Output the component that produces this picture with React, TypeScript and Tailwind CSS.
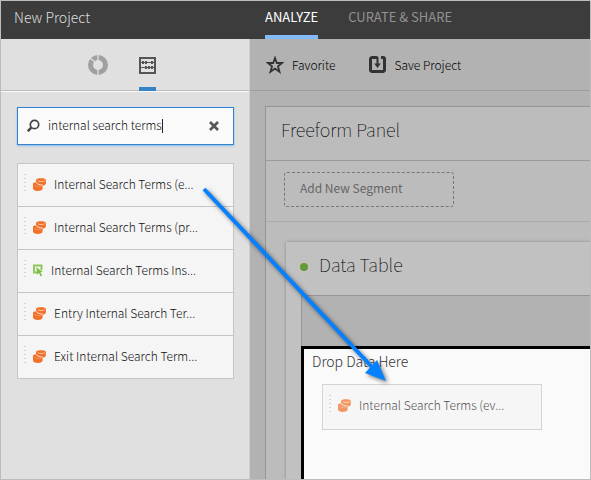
import { useState } from "react";

const items = [
  { label: "Internal Search Terms (e...", kind: "dimension" },
  { label: "Internal Search Terms (pr...", kind: "dimension" },
  { label: "Internal Search Terms Ins...", kind: "metric" },
  { label: "Entry Internal Search Ter...", kind: "dimension" },
  { label: "Exit Internal Search Term...", kind: "dimension" },
];

function Grip() {
  return (
    <svg width="2" height="17" viewBox="0 0 2 17" className="mr-[7px] mb-1 shrink-0" fill="#d2d2d2" aria-hidden="true">
      {[0, 4, 8, 12, 16].map((y) => (
        <rect key={y} x="0" y={y} width="2" height="1" />
      ))}
    </svg>
  );
}

function DimensionIcon() {
  return (
    <svg width="13" height="13" viewBox="0 0 13 13" className="mr-2 shrink-0" aria-hidden="true">
      <path d="M3 2.200C3 .8 5 .2 8 .2s4.900.6 4.900 2v3C12.900 6.600 11 7.800 8.500 7.800 5 7.800 3 5.500 3 4z" fill="#f37029" />
      <path d="M4.800 2.600c.6 1.300 5.800 1.300 7 .1" fill="none" stroke="#ffd9c0" strokeWidth=".8" />
      <path d="M0 6C0 5 1 4.400 2.800 4.300 4 6 6 6.900 9.600 7.200v3.200c0 1.600-2 2.500-4.800 2.500S0 12 0 10.400z" fill="#f37029" />
      <path d="M3 4.200c1 1.900 3.500 2.800 6.800 2.900" fill="none" stroke="#f5f5f5" strokeWidth=".9" />
      <path d="M1.200 7.300c1.500 1.300 4.500 1.600 6.800 1.200" fill="none" stroke="#f9a878" strokeWidth=".6" />
    </svg>
  );
}

function MetricIcon() {
  return (
    <svg width="10" height="13" viewBox="0 0 10 13" className="mr-2 shrink-0" aria-hidden="true">
      <path d="M4 8.500H1v-7h7.500V6" fill="none" stroke="#8bc657" strokeWidth="1.900" />
      <path d="M3.200 3.300 9.900 8H7.500l1.600 3.600-1.500.8L6 9 4.200 10.700z" fill="#7bc043" />
    </svg>
  );
}

function DonutIcon() {
  return (
    <svg width="20" height="20" viewBox="0 0 20 20" aria-hidden="true">
      <circle cx="10" cy="10" r="7.500" fill="none" stroke="#a0a0a0" strokeWidth="5" />
      <path d="M10 0v6M10 14v6M2 3l5 4" stroke="#e0e0e0" strokeWidth="1.300" />
    </svg>
  );
}

function AbacusIcon() {
  return (
    <svg width="17" height="17" viewBox="0 0 17 17" aria-hidden="true">
      <rect x="1" y="1" width="15" height="15" fill="none" stroke="#555" strokeWidth="2" />
      <path d="M2 5.500h13M2 10.500h13" stroke="#555" />
      <path d="M3 4h2v3H3zM6 4h2v3H6zM12 4h2v3h-2zM6 9h2v3H6zM9 9h2v3H9zM12 9h2v3h-2z" fill="#555" />
    </svg>
  );
}

export default function App() {
  const [query, setQuery] = useState("internal search terms");
  return (
    <div className="relative flex h-screen flex-col overflow-hidden border border-[#bdbdbd] bg-[#b2b2b2] font-['Noto_Sans_CJK_SC','Open_Sans',sans-serif] text-[12px] leading-4 font-light text-[#111]">
      <header className="flex h-[38px] shrink-0 bg-[#3c3c3c]">
        <h1 className="w-[249px] shrink-0 pt-1 pl-[13px] text-[14px] leading-6 font-light text-[#dedede]">New Project</h1>
        <nav className="flex gap-[30px] pl-[15px] text-[13px] font-normal">
          <button className="border-b-4 border-[#84b9f7] pb-[3px] text-white">ANALYZE</button>
          <button className="border-b-4 border-transparent pb-[3px] text-[#929292]">CURATE &amp; SHARE</button>
        </nav>
      </header>

      <div className="flex min-h-0 flex-1">
        <aside className="w-[249px] shrink-0 border-r border-[#d0d0d0] bg-[#e0e0e0]">
          <div className="flex h-[53px] justify-center gap-[31px] border-b border-[#fafafa] pr-[6px] shadow-[inset_0_-1px_0_#bbb]">
            <button aria-label="Components" className="flex h-[52px] items-center"><DonutIcon /></button>
            <button aria-label="Metrics" className="flex h-[52px] items-end border-b-4 border-[#3583c7] pb-[13px]"><AbacusIcon /></button>
          </div>

          <div className="pt-[15px] pr-[15px] pl-4">
            <div className="flex h-[38px] items-center border border-[#2f83cf] bg-[#fafafa] pr-[14px] pb-px pl-[9px] shadow-[0_1px_2px_#8dbbe8]">
              <svg width="13" height="13" viewBox="0 0 13 13" className="shrink-0" fill="none" stroke="#444" aria-hidden="true">
                <circle cx="7.500" cy="5.500" r="4.200" strokeWidth="1.700" />
                <path d="m4.300 8.700-3.500 3.500" strokeWidth="2.400" />
              </svg>
              <div className="relative ml-2 min-w-0 flex-1">
                <input aria-label="Search components" value={query} onChange={(e) => setQuery(e.target.value)} className="block h-6 w-full bg-transparent pb-[2px] outline-none" />
                <span className="pointer-events-none absolute inset-0 flex items-center" aria-hidden="true">
                  <span className="invisible whitespace-pre">{query}</span>
                  <span className="h-[14px] w-px bg-[#222]" />
                </span>
              </div>
              <button aria-label="Clear search">
                <svg width="10" height="10" viewBox="0 0 10 10" stroke="#555" strokeWidth="2.600" aria-hidden="true"><path d="m1 1 8 8M9 1 1 9" /></svg>
              </button>
            </div>

            <ul className="mt-[18px] divide-y divide-[#c5c5c5] border border-[#c5c5c5] bg-[#f5f5f5]">
              {items.map((item) => (
                <li key={item.label} className="flex h-[43px] items-center pb-[2px] pl-[6px] last:h-[42px]">
                  <Grip />
                  {item.kind === "metric" ? <MetricIcon /> : <DimensionIcon />}
                  <span className="whitespace-nowrap">{item.label}</span>
                </li>
              ))}
            </ul>
          </div>
        </aside>

        <main className="flex min-w-0 flex-1 flex-col">
          <div className="flex h-[52px] shrink-0 items-center gap-[34px] border-b border-[#9d9d9d] pl-4 text-black">
            <button className="flex items-center gap-2">
              <svg width="18" height="18" viewBox="0 0 18 18" fill="none" stroke="#333" strokeWidth="1.800" aria-hidden="true">
                <path d="m9 2 1.800 5H16l-4 3.400 1.500 5.300L9 12.500l-4.500 3.200L6 10.400 2 7h5.200z" />
              </svg>
              Favorite
            </button>
            <button className="flex items-center gap-2">
              <svg width="17" height="17" viewBox="0 0 17 17" fill="none" stroke="#333" aria-hidden="true">
                <path d="M8.500 1.500H3A1.500 1.500 0 0 0 1.500 3v11A1.500 1.500 0 0 0 3 15.500h11a1.500 1.500 0 0 0 1.500-1.500V3c0-1-.5-1.500-1.500-1.500h-2" strokeWidth="3" />
                <path d="M8.500 1v8" strokeWidth="2" />
                <path d="M5.200 7.500h6.600L8.500 12z" fill="#333" stroke="none" />
              </svg>
              Save Project
            </button>
          </div>

          <section className="mt-[15px] ml-[15px] flex min-h-0 flex-1 flex-col border-t border-l border-[#959595] bg-[#bcbcbc]">
            <h2 className="h-[54px] shrink-0 border-b border-[#999] pt-[10px] pl-[15px] text-[18px] leading-6 font-thin text-black">Freeform Panel</h2>
            <div className="h-[61px] shrink-0 border-b border-[#aaa] pt-[11px] pl-[18px]">
              <button className="block h-[35px] w-[170px] rounded-[3px] border border-dashed border-[#777] pb-[3px] pl-[15px] text-left font-normal text-[#666]">Add New Segment</button>
            </div>
            <section className="mt-5 ml-5 flex min-h-0 flex-1 flex-col bg-[#c1c1c1] pl-[15px] shadow-[0_0_3px_#888]">
              <h3 className="flex h-[53px] shrink-0 items-center gap-[11px] pb-[10px] text-[18px] leading-6 font-thin text-black">
                <span className="mt-[6px] -ml-px size-2 rounded-full bg-[#669933]" />
                Data Table
              </h3>
              <div className="h-[51px] shrink-0 border-t border-l border-[#959595] bg-[#b2b2b2]" />
              <div className="min-h-0 flex-1 border-t-[3px] border-l-[3px] border-black bg-[#fafafa] pl-2">
                <p className="text-[14px] leading-6 font-light text-[#333]">Drop Data Here</p>
                <div className="mt-[11px] ml-[10px] flex h-[46px] w-[220px] items-center border border-[#d3d3d3] bg-[#f6f6f6] pb-1 pl-[6px] text-[#555]">
                  <Grip />
                  <span className="opacity-70"><DimensionIcon /></span>
                  <span className="whitespace-nowrap">Internal Search Terms (ev...</span>
                </div>
              </div>
            </section>
          </section>
        </main>
      </div>

      <svg width="240" height="240" viewBox="180 160 240 240" className="pointer-events-none absolute top-[159px] left-[179px] drop-shadow-[2px_2px_2px_#0008]" aria-hidden="true">
        <path d="m204 189 168 178" stroke="#0580ff" strokeWidth="4" />
        <path d="m386 381-21-8 12-13z" fill="#0580ff" />
      </svg>
    </div>
  );
}
